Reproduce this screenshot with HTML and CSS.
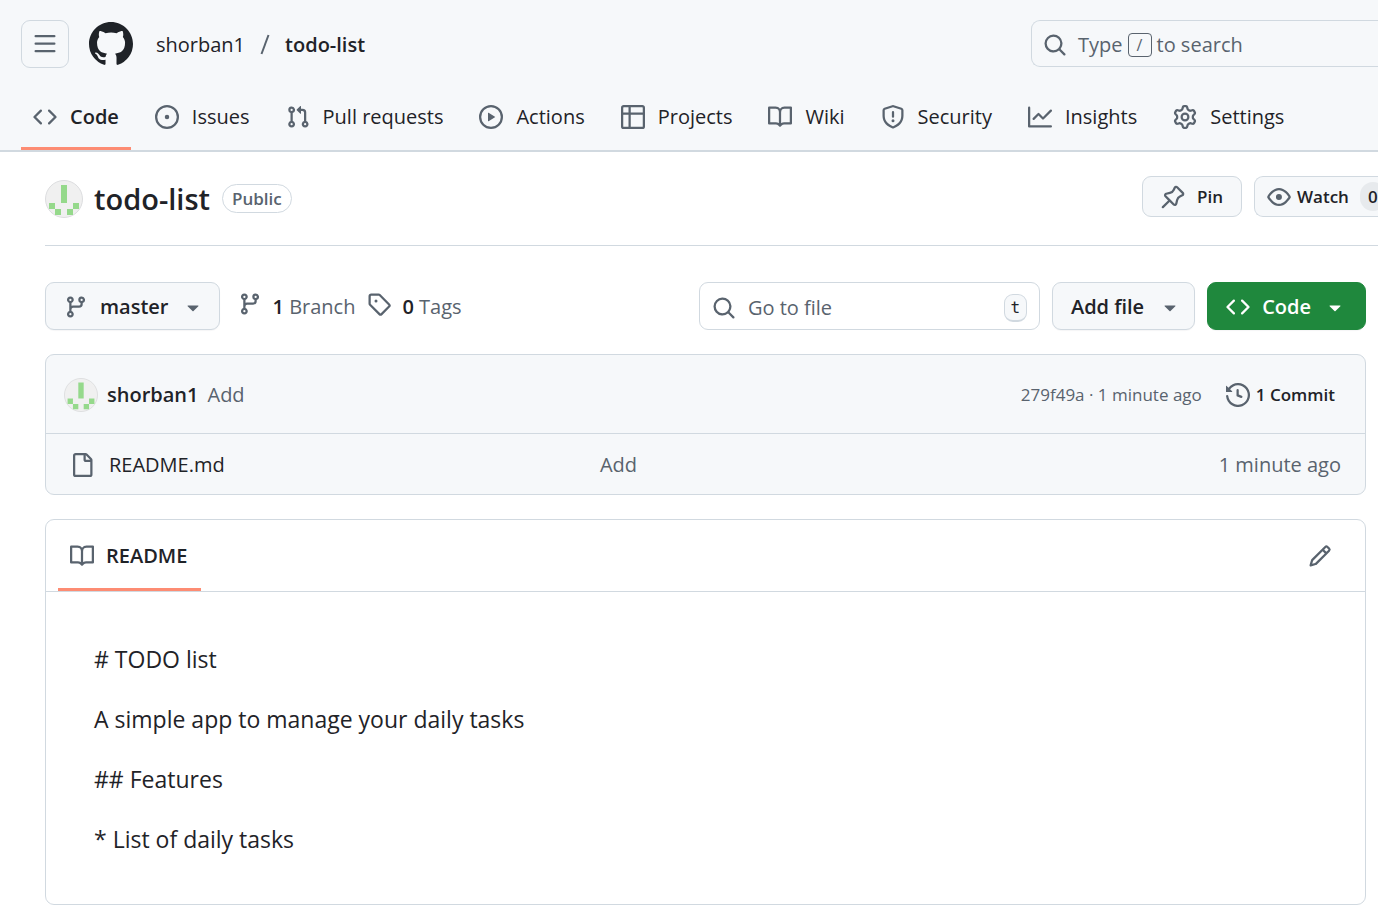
FILE: index.html
```html
<!DOCTYPE html>
<html lang="en">
<head>
<meta charset="utf-8">
<meta name="viewport" content="width=device-width, initial-scale=1">
<title>shorban1/todo-list</title>
<link rel="stylesheet" href="styles.css">
</head>
<body>
<svg class="sprite" aria-hidden="true">
  <symbol id="i-menu" viewBox="0 0 16 16"><path d="M1 2.75A.75.75 0 0 1 1.75 2h12.5a.75.75 0 0 1 0 1.5H1.75A.75.75 0 0 1 1 2.75Zm0 5A.75.75 0 0 1 1.75 7h12.5a.75.75 0 0 1 0 1.5H1.75A.75.75 0 0 1 1 7.75ZM1.75 12h12.5a.75.75 0 0 1 0 1.5H1.75a.75.75 0 0 1 0-1.5Z"/></symbol>
  <symbol id="i-mark" viewBox="0 0 16 16"><path d="M8 0c4.42 0 8 3.58 8 8a8.013 8.013 0 0 1-5.45 7.59c-.4.08-.55-.17-.55-.38 0-.27.01-1.13.01-2.2 0-.75-.25-1.23-.54-1.48 1.78-.2 3.65-.88 3.65-3.95 0-.88-.31-1.59-.82-2.15.08-.2.36-1.02-.08-2.12 0 0-.67-.22-2.2.82-.64-.18-1.32-.27-2-.27-.68 0-1.36.09-2 .27-1.53-1.03-2.2-.82-2.2-.82-.44 1.1-.16 1.92-.08 2.12-.51.56-.82 1.28-.82 2.15 0 3.06 1.86 3.75 3.64 3.95-.23.2-.44.55-.51 1.07-.46.21-1.61.55-2.33-.66-.15-.24-.6-.83-1.23-.82-.67.01-.27.38.01.53.34.19.73.9.82 1.13.16.45.68 1.31 2.69.94 0 .67.01 1.3.01 1.49 0 .21-.15.45-.55.38A7.995 7.995 0 0 1 0 8c0-4.42 3.58-8 8-8Z"/></symbol>
  <symbol id="i-search" viewBox="0 0 16 16"><path d="M10.68 11.74a6 6 0 0 1-7.922-8.982 6 6 0 0 1 8.982 7.922l3.04 3.04a.749.749 0 0 1-.326 1.275.749.749 0 0 1-.734-.215ZM11.5 7a4.499 4.499 0 1 0-8.997 0A4.499 4.499 0 0 0 11.5 7Z"/></symbol>
  <symbol id="i-code" viewBox="0 0 16 16"><path d="m11.28 3.22 4.25 4.25a.75.75 0 0 1 0 1.06l-4.25 4.25a.749.749 0 0 1-1.275-.326.749.749 0 0 1 .215-.734L13.94 8l-3.72-3.72a.749.749 0 0 1 .326-1.275.749.749 0 0 1 .734.215Zm-6.56 0a.751.751 0 0 1 1.042.018.751.751 0 0 1 .018 1.042L2.06 8l3.72 3.72a.749.749 0 0 1-.326 1.275.749.749 0 0 1-.734-.215L.47 8.53a.75.75 0 0 1 0-1.06Z"/></symbol>
  <symbol id="i-issue" viewBox="0 0 16 16"><path d="M8 9.5a1.5 1.5 0 1 0 0-3 1.5 1.5 0 0 0 0 3Z"/><path d="M8 0a8 8 0 1 1 0 16A8 8 0 0 1 8 0ZM1.5 8a6.5 6.5 0 1 0 13 0 6.5 6.5 0 0 0-13 0Z"/></symbol>
  <symbol id="i-pull" viewBox="0 0 16 16"><path d="M1.5 3.25a2.25 2.25 0 1 1 3 2.122v5.256a2.251 2.251 0 1 1-1.5 0V5.372A2.25 2.25 0 0 1 1.5 3.25Zm5.677-.177L9.573.677A.25.25 0 0 1 10 .854V2.5h1A2.5 2.5 0 0 1 13.5 5v5.628a2.251 2.251 0 1 1-1.5 0V5a1 1 0 0 0-1-1h-1v1.646a.25.25 0 0 1-.427.177L7.177 3.427a.25.25 0 0 1 0-.354ZM3.75 2.5a.75.75 0 1 0 0 1.5.75.75 0 0 0 0-1.5Zm0 9.5a.75.75 0 1 0 0 1.5.75.75 0 0 0 0-1.5Zm8.25.75a.75.75 0 1 0 1.5 0 .75.75 0 0 0-1.5 0Z"/></symbol>
  <symbol id="i-play" viewBox="0 0 16 16"><path d="M8 0a8 8 0 1 1 0 16A8 8 0 0 1 8 0ZM1.5 8a6.5 6.5 0 1 0 13 0 6.5 6.5 0 0 0-13 0Zm4.879-2.773 4.264 2.559a.25.25 0 0 1 0 .428l-4.264 2.559A.25.25 0 0 1 6 10.559V5.442a.25.25 0 0 1 .379-.215Z"/></symbol>
  <symbol id="i-table" viewBox="0 0 16 16"><path d="M0 1.75C0 .784.784 0 1.75 0h12.5C15.216 0 16 .784 16 1.75v12.5A1.75 1.75 0 0 1 14.25 16H1.75A1.75 1.75 0 0 1 0 14.25ZM6.5 6.5v8h7.75a.25.25 0 0 0 .25-.25V6.5Zm8-1.5V1.75a.25.25 0 0 0-.25-.25H6.5V5Zm-13 1.5v7.75c0 .138.112.25.25.25H5v-8ZM5 5V1.5H1.75a.25.25 0 0 0-.25.25V5Z"/></symbol>
  <symbol id="i-book" viewBox="0 0 16 16"><path d="M0 1.75A.75.75 0 0 1 .75 1h4.253c1.227 0 2.317.59 3 1.501A3.743 3.743 0 0 1 11.006 1h4.245a.75.75 0 0 1 .75.75v10.5a.75.75 0 0 1-.75.75h-4.507a2.25 2.25 0 0 0-1.591.659l-.622.621a.75.75 0 0 1-1.06 0l-.622-.621A2.25 2.25 0 0 0 5.258 13H.75a.75.75 0 0 1-.75-.75Zm7.251 10.324.004-5.073-.002-2.253A2.25 2.25 0 0 0 5.003 2.5H1.5v9h3.757a3.75 3.75 0 0 1 1.994.574ZM8.755 4.75l-.004 7.322a3.752 3.752 0 0 1 1.992-.572H14.5v-9h-3.495a2.25 2.25 0 0 0-2.25 2.25Z"/></symbol>
  <symbol id="i-shield" viewBox="0 0 16 16"><path d="M7.467.133a1.748 1.748 0 0 1 1.066 0l5.25 1.68A1.75 1.75 0 0 1 15 3.48V7c0 1.566-.32 3.182-1.303 4.682-.983 1.498-2.585 2.813-5.032 3.855a1.697 1.697 0 0 1-1.33 0c-2.447-1.042-4.049-2.357-5.032-3.855C1.32 10.182 1 8.566 1 7V3.48a1.75 1.75 0 0 1 1.217-1.667Zm.61 1.429a.25.25 0 0 0-.153 0l-5.25 1.68a.25.25 0 0 0-.174.238V7c0 1.358.275 2.666 1.057 3.86.784 1.194 2.121 2.34 4.366 3.297a.196.196 0 0 0 .154 0c2.245-.956 3.582-2.104 4.366-3.298C13.225 9.666 13.5 8.36 13.5 7V3.48a.251.251 0 0 0-.174-.237l-5.25-1.68ZM8.75 4.75v3a.75.75 0 0 1-1.5 0v-3a.75.75 0 0 1 1.5 0ZM9 10.5a1 1 0 1 1-2 0 1 1 0 0 1 2 0Z"/></symbol>
  <symbol id="i-graph" viewBox="0 0 16 16"><path d="M1.5 1.75V13.5h13.75a.75.75 0 0 1 0 1.5H.75a.75.75 0 0 1-.75-.75V1.75a.75.75 0 0 1 1.5 0Zm14.28 2.53-5.25 5.25a.75.75 0 0 1-1.06 0L7 7.06 4.28 9.78a.751.751 0 0 1-1.042-.018.751.751 0 0 1-.018-1.042l3.25-3.25a.75.75 0 0 1 1.06 0L10 7.94l4.72-4.72a.751.751 0 0 1 1.042.018.751.751 0 0 1 .018 1.042Z"/></symbol>
  <symbol id="i-gear" viewBox="0 0 16 16"><path d="M8 0a8.2 8.2 0 0 1 .701.031C9.444.095 9.99.645 10.16 1.29l.288 1.107c.018.066.079.158.212.224.231.114.454.243.668.386.123.082.233.09.299.071l1.103-.303c.644-.176 1.392.021 1.82.63.27.385.506.792.704 1.218.315.675.111 1.422-.364 1.891l-.814.806c-.049.048-.098.147-.088.294.016.257.016.515 0 .772-.01.147.038.246.088.294l.814.806c.475.469.679 1.216.364 1.891a7.977 7.977 0 0 1-.704 1.217c-.428.61-1.176.807-1.82.63l-1.102-.302c-.067-.019-.177-.011-.3.071a5.909 5.909 0 0 1-.668.386c-.133.066-.194.158-.211.224l-.29 1.106c-.168.646-.715 1.196-1.458 1.26a8.006 8.006 0 0 1-1.402 0c-.743-.064-1.289-.614-1.458-1.26l-.289-1.106c-.018-.066-.079-.158-.212-.224a5.738 5.738 0 0 1-.668-.386c-.123-.082-.233-.09-.299-.071l-1.103.303c-.644.176-1.392-.021-1.82-.63a8.12 8.12 0 0 1-.704-1.218c-.315-.675-.111-1.422.363-1.891l.815-.806c.05-.048.098-.147.088-.294a6.214 6.214 0 0 1 0-.772c.01-.147-.038-.246-.088-.294l-.815-.806C.635 6.045.431 5.298.746 4.623a7.92 7.92 0 0 1 .704-1.217c.428-.61 1.176-.807 1.82-.63l1.102.302c.067.019.177.011.3-.071.214-.143.437-.272.668-.386.133-.066.194-.158.211-.224l.29-1.106C6.009.645 6.556.095 7.299.03 7.53.01 7.764 0 8 0Zm-.571 1.525c-.036.003-.108.036-.137.146l-.289 1.105c-.147.561-.549.967-.998 1.189-.173.086-.34.183-.5.29-.417.278-.97.423-1.529.27l-1.103-.303c-.109-.03-.175.016-.195.045-.22.312-.412.644-.573.99-.014.031-.021.11.059.19l.815.806c.411.406.562.957.53 1.456a4.709 4.709 0 0 0 0 .582c.032.499-.119 1.05-.53 1.456l-.815.806c-.081.08-.073.159-.059.19.162.346.353.677.573.989.02.03.085.076.195.046l1.102-.303c.56-.153 1.113-.008 1.53.27.161.107.328.204.501.29.447.222.85.629.997 1.189l.289 1.105c.029.109.101.143.137.146a6.6 6.6 0 0 0 1.142 0c.036-.003.108-.036.137-.146l.289-1.105c.147-.561.549-.967.998-1.189.173-.086.34-.183.5-.29.417-.278.97-.423 1.529-.27l1.103.303c.109.029.175-.016.195-.045.22-.313.411-.644.573-.99.014-.031.021-.11-.059-.19l-.815-.806c-.411-.406-.562-.957-.53-1.456a4.709 4.709 0 0 0 0-.582c-.032-.499.119-1.05.53-1.456l.815-.806c.081-.08.073-.159.059-.19a6.464 6.464 0 0 0-.573-.989c-.02-.03-.085-.076-.195-.046l-1.102.303c-.56.153-1.113.008-1.53-.27a4.44 4.44 0 0 0-.501-.29c-.447-.222-.85-.629-.997-1.189l-.289-1.105c-.029-.11-.101-.143-.137-.146a6.6 6.6 0 0 0-1.142 0ZM11 8a3 3 0 1 1-6 0 3 3 0 0 1 6 0ZM9.5 8a1.5 1.5 0 1 0-3.001.001A1.5 1.5 0 0 0 9.5 8Z"/></symbol>
  <symbol id="i-pin" viewBox="0 0 16 16"><path d="m11.294.984 3.722 3.722a1.75 1.75 0 0 1-.504 2.826l-1.327.613a3.089 3.089 0 0 0-1.707 2.084l-.584 2.454c-.317 1.332-1.972 1.8-2.94.832L5.75 11.311 1.78 15.28a.749.749 0 1 1-1.06-1.06l3.969-3.97-2.204-2.204c-.968-.968-.5-2.623.832-2.94l2.454-.584a3.08 3.08 0 0 0 2.084-1.707l.613-1.327a1.75 1.75 0 0 1 2.826-.504ZM6.283 9.723l2.732 2.731a.25.25 0 0 0 .42-.119l.584-2.454a4.586 4.586 0 0 1 2.537-3.098l1.328-.613a.25.25 0 0 0 .072-.404l-3.722-3.722a.25.25 0 0 0-.404.072l-.613 1.328a4.584 4.584 0 0 1-3.098 2.537l-2.454.584a.25.25 0 0 0-.119.42l2.731 2.732Z"/></symbol>
  <symbol id="i-eye" viewBox="0 0 16 16"><path d="M8 2c1.981 0 3.671.992 4.933 2.078 1.27 1.091 2.187 2.345 2.637 3.023a1.62 1.62 0 0 1 0 1.798c-.45.678-1.367 1.932-2.637 3.023C11.67 13.008 9.981 14 8 14c-1.981 0-3.671-.992-4.933-2.078C1.797 10.83.88 9.576.43 8.898a1.62 1.62 0 0 1 0-1.798c.45-.677 1.367-1.931 2.637-3.022C4.33 2.992 6.019 2 8 2ZM1.679 7.932a.12.12 0 0 0 0 .136c.411.622 1.241 1.75 2.366 2.717C5.176 11.758 6.527 12.5 8 12.5c1.473 0 2.825-.742 3.955-1.715 1.124-.967 1.954-2.096 2.366-2.717a.12.12 0 0 0 0-.136c-.412-.621-1.242-1.75-2.366-2.717C10.824 4.242 9.473 3.5 8 3.5c-1.473 0-2.825.742-3.955 1.715-1.124.967-1.954 2.096-2.366 2.717ZM8 10a2 2 0 1 1-.001-3.999A2 2 0 0 1 8 10Z"/></symbol>
  <symbol id="i-branch" viewBox="0 0 16 16"><path d="M9.5 3.25a2.25 2.25 0 1 1 3 2.122V6A2.5 2.5 0 0 1 10 8.5H6a1 1 0 0 0-1 1v1.128a2.251 2.251 0 1 1-1.5 0V5.372a2.25 2.25 0 1 1 1.5 0v1.836A2.493 2.493 0 0 1 6 7h4a1 1 0 0 0 1-1v-.628A2.25 2.25 0 0 1 9.5 3.25Zm-6 0a.75.75 0 1 0 1.5 0 .75.75 0 0 0-1.5 0Zm8.25-.75a.75.75 0 1 0 0 1.5.75.75 0 0 0 0-1.5ZM4.25 12a.75.75 0 1 0 0 1.5.75.75 0 0 0 0-1.5Z"/></symbol>
  <symbol id="i-tag" viewBox="0 0 16 16"><path d="M1 7.775V2.75C1 1.784 1.784 1 2.75 1h5.025c.464 0 .91.184 1.238.513l6.25 6.25a1.75 1.75 0 0 1 0 2.474l-5.026 5.026a1.75 1.75 0 0 1-2.474 0l-6.25-6.25A1.752 1.752 0 0 1 1 7.775Zm1.5 0c0 .066.026.13.073.177l6.25 6.25a.25.25 0 0 0 .354 0l5.025-5.025a.25.25 0 0 0 0-.354l-6.25-6.25a.25.25 0 0 0-.177-.073H2.75a.25.25 0 0 0-.25.25ZM6 5a1 1 0 1 1 0 2 1 1 0 0 1 0-2Z"/></symbol>
  <symbol id="i-caret" viewBox="0 0 16 16"><path d="m4.427 7.427 3.396 3.396a.25.25 0 0 0 .354 0l3.396-3.396A.25.25 0 0 0 11.396 7H4.604a.25.25 0 0 0-.177.427Z"/></symbol>
  <symbol id="i-history" viewBox="0 0 16 16"><path d="m.427 1.927 1.215 1.215a8.002 8.002 0 1 1-1.6 5.685.75.75 0 1 1 1.493-.154 6.5 6.5 0 1 0 1.18-4.458l1.358 1.358A.25.25 0 0 1 3.896 6H.25A.25.25 0 0 1 0 5.75V2.104a.25.25 0 0 1 .427-.177ZM7.75 4a.75.75 0 0 1 .75.75v2.992l2.028.812a.75.75 0 0 1-.557 1.392l-2.5-1A.751.751 0 0 1 7 8.25v-3.5A.75.75 0 0 1 7.75 4Z"/></symbol>
  <symbol id="i-file" viewBox="0 0 16 16"><path d="M2 1.75C2 .784 2.784 0 3.75 0h6.586c.464 0 .909.184 1.237.513l2.914 2.914c.329.328.513.773.513 1.237v9.586A1.75 1.75 0 0 1 13.25 16h-9.5A1.75 1.75 0 0 1 2 14.25Zm1.75-.25a.25.25 0 0 0-.25.25v12.5c0 .138.112.25.25.25h9.5a.25.25 0 0 0 .25-.25V6h-2.75A1.75 1.75 0 0 1 9 4.25V1.5Zm6.75.062V4.25c0 .138.112.25.25.25h2.688l-.011-.013-2.914-2.914-.013-.011Z"/></symbol>
  <symbol id="i-pencil" viewBox="0 0 16 16"><path d="M11.013 1.427a1.75 1.75 0 0 1 2.474 0l1.086 1.086a1.75 1.75 0 0 1 0 2.474l-8.61 8.61c-.21.21-.47.364-.756.445l-3.251.93a.75.75 0 0 1-.927-.928l.929-3.25c.081-.286.235-.547.445-.758l8.61-8.61Zm.176 4.823L9.75 4.81l-6.286 6.287a.253.253 0 0 0-.064.108l-.558 1.953 1.953-.558a.253.253 0 0 0 .108-.064Zm1.238-3.763a.25.25 0 0 0-.354 0L10.811 3.75l1.439 1.44 1.263-1.263a.25.25 0 0 0 0-.354Z"/></symbol>
  <symbol id="i-avatar" viewBox="0 0 38 38"><circle cx="19" cy="19" r="18.5" fill="#f0f0f0" stroke="#dcdddf"/><path fill="#95d98b" d="M16 5h6v18h-6zM4 23h6v6H4zM28 23h6v6h-6zM10 29h6v6h-6zM22 29h6v6h-6z"/></symbol>
</svg>

<header class="site-header">
  <div class="top-bar">
    <button class="menu-button" type="button" aria-label="Open menu"><svg class="icon"><use href="#i-menu"/></svg></button>
    <a class="mark" href="#" aria-label="Home"><svg class="mark-icon"><use href="#i-mark"/></svg></a>
    <nav class="crumbs" aria-label="Breadcrumb">
      <a href="#">shorban1</a>
      <svg class="slash" viewBox="0 0 10 22" aria-hidden="true"><path d="M8.500 1 1.500 20"/></svg>
      <a class="current" href="#">todo-list</a>
    </nav>
    <button class="site-search" type="button">
      <svg class="icon"><use href="#i-search"/></svg>
      <span class="search-hint">Type <kbd class="slash-key">/</kbd> to search</span>
    </button>
  </div>
  <nav class="tabs" aria-label="Repository">
    <a class="tab selected" href="#"><svg class="icon"><use href="#i-code"/></svg>Code</a>
    <a class="tab" href="#"><svg class="icon"><use href="#i-issue"/></svg>Issues</a>
    <a class="tab" href="#"><svg class="icon"><use href="#i-pull"/></svg>Pull requests</a>
    <a class="tab" href="#"><svg class="icon"><use href="#i-play"/></svg>Actions</a>
    <a class="tab" href="#"><svg class="icon"><use href="#i-table"/></svg>Projects</a>
    <a class="tab" href="#"><svg class="icon"><use href="#i-book"/></svg>Wiki</a>
    <a class="tab" href="#"><svg class="icon"><use href="#i-shield"/></svg>Security</a>
    <a class="tab" href="#"><svg class="icon"><use href="#i-graph"/></svg>Insights</a>
    <a class="tab" href="#"><svg class="icon"><use href="#i-gear"/></svg>Settings</a>
  </nav>
</header>

<main>
  <div class="repo-head">
    <svg class="avatar"><use href="#i-avatar"/></svg>
    <h1 class="repo-name">todo-list</h1>
    <span class="visibility">Public</span>
    <div class="repo-actions">
      <button class="small-button pin" type="button"><svg class="icon"><use href="#i-pin"/></svg>Pin</button>
      <button class="small-button watch" type="button"><svg class="icon"><use href="#i-eye"/></svg>Watch<span class="count">0</span></button>
    </div>
  </div>

  <div class="content">
    <div class="toolbar">
      <button class="button branch-button" type="button"><svg class="icon"><use href="#i-branch"/></svg>master<svg class="icon"><use href="#i-caret"/></svg></button>
      <a class="stat" href="#"><svg class="icon"><use href="#i-branch"/></svg><span><b>1</b> Branch</span></a>
      <a class="stat tags" href="#"><svg class="icon"><use href="#i-tag"/></svg><span><b>0</b> Tags</span></a>
      <label class="file-search">
        <svg class="icon"><use href="#i-search"/></svg>
        <input type="text" placeholder="Go to file" aria-label="Go to file">
        <kbd class="key">t</kbd>
      </label>
      <button class="button add-button" type="button">Add file<svg class="icon"><use href="#i-caret"/></svg></button>
      <button class="button code-button" type="button"><svg class="icon"><use href="#i-code"/></svg>Code<svg class="icon"><use href="#i-caret"/></svg></button>
    </div>

    <div class="panel files">
      <table class="file-table">
        <colgroup>
          <col class="col-name">
          <col>
          <col class="col-age">
        </colgroup>
        <thead>
          <tr><th colspan="3">
            <div class="commit">
              <svg class="avatar-small"><use href="#i-avatar"/></svg>
              <a class="author" href="#">shorban1</a>
              <a class="message" href="#">Add</a>
              <span class="when">279f49a · 1 minute ago</span>
              <a class="commits" href="#"><svg class="icon"><use href="#i-history"/></svg>1 Commit</a>
            </div>
          </th></tr>
        </thead>
        <tbody>
          <tr>
            <td class="name"><a class="file" href="#"><svg class="icon"><use href="#i-file"/></svg>README.md</a></td>
            <td class="note">Add</td>
            <td class="age">1 minute ago</td>
          </tr>
        </tbody>
      </table>
    </div>

    <section class="panel">
      <div class="readme-head">
        <a class="readme-tab" href="#"><svg class="icon"><use href="#i-book"/></svg>README</a>
        <button class="edit" type="button" aria-label="Edit file"><svg class="icon"><use href="#i-pencil"/></svg></button>
      </div>
      <article class="readme">
        <p># TODO list</p>
        <p>A simple app to manage your daily tasks</p>
        <p>## Features</p>
        <p>* List of daily tasks</p>
      </article>
    </section>
  </div>
</main>
</body>
</html>
```
FILE: styles.css
```css
:root {
  --text: #1f2328;
  --muted: #59636e;
  --line: #d1d9e0;
  --soft: #f6f8fa;
  --accent: #fd8c73;
  --green: #1f883d;
}

* {
  box-sizing: border-box;
}

body {
  margin: 0;
  overflow-x: hidden;
  background: #fff;
  color: var(--text);
  font: 20px/30px "Segoe UI", "Open Sans", "Noto Sans", sans-serif;
}

a {
  color: inherit;
  text-decoration: none;
}

button,
input,
kbd {
  color: inherit;
  font: inherit;
}

button {
  cursor: pointer;
}

.sprite {
  display: none;
}

.icon {
  flex: none;
  width: 24px;
  height: 24px;
  fill: var(--muted);
}

/* Site header */

.site-header {
  padding-top: 20px;
  border-bottom: 2px solid var(--line);
  background: var(--soft);
}

.top-bar {
  display: flex;
  align-items: flex-start;
  padding-left: 21px;
}

.menu-button {
  display: grid;
  place-items: center;
  width: 48px;
  height: 48px;
  padding: 0;
  border: 1px solid var(--line);
  border-radius: 9px;
  background: none;
}

.mark {
  margin: 2px 23px 0 20px;
}

.mark-icon {
  display: block;
  width: 44px;
  height: 44px;
  fill: var(--text);
}

.crumbs {
  display: flex;
  flex: 1;
  align-items: center;
  padding-top: 10px;
}

.slash {
  width: 10px;
  height: 22px;
  margin: 0 15px;
  fill: none;
  stroke: var(--muted);
  stroke-width: 2;
}

.current {
  font-weight: 600;
}

.site-search {
  display: flex;
  align-items: center;
  gap: 11px;
  width: 347px;
  height: 47px;
  padding: 2px 11px 0;
  border: 1px solid var(--line);
  border-right: 0;
  border-radius: 9px 0 0 9px;
  background: none;
  color: var(--muted);
}

.search-hint {
  display: flex;
  align-items: center;
  gap: 5px;
}

.slash-key {
  width: 24px;
  height: 24px;
  border: 1px solid var(--muted);
  border-radius: 4px;
  font-size: 16px;
  line-height: 22px;
  text-align: center;
}

.tabs {
  display: flex;
  gap: 12px;
  margin-top: 14px;
  padding-left: 21px;
}

.tab {
  display: flex;
  align-items: center;
  gap: 13px;
  padding: 20px 12px 15px;
  border-bottom: 3px solid transparent;
  line-height: 30px;
}

.tab.selected {
  border-color: var(--accent);
  font-weight: 600;
}

/* Repository heading */

.repo-head {
  display: flex;
  align-items: center;
  height: 94px;
  margin-left: 45px;
  border-bottom: 1px solid var(--line);
}

.avatar {
  width: 38px;
  height: 38px;
}

.repo-name {
  margin: 0 12px 0 11px;
  font-size: 29px;
  font-weight: 600;
  line-height: 36px;
}

.visibility {
  padding: 0 9px;
  border: 1px solid var(--line);
  border-radius: 15px;
  color: var(--muted);
  font-size: 17px;
  font-weight: 600;
  line-height: 27px;
}

.repo-actions {
  display: flex;
  gap: 12px;
  margin-left: auto;
  padding-bottom: 4px;
}

.small-button {
  display: flex;
  align-items: center;
  height: 41px;
  border: 1px solid var(--line);
  border-radius: 9px;
  background: var(--soft);
  font-size: 17px;
  font-weight: 600;
}

.pin {
  gap: 12px;
  padding: 0 18px;
}

.watch {
  gap: 6px;
  width: 124px;
  padding: 0 0 0 12px;
  overflow: hidden;
  border-right: 0;
  border-radius: 9px 0 0 9px;
}

.count {
  flex: none;
  margin-left: 5px;
  padding: 0 8px;
  border-radius: 15px;
  background: #e7eaed;
  line-height: 29px;
}

/* Toolbar */

.content {
  padding: 36px 12px 19px 45px;
}

.toolbar {
  display: flex;
  align-items: center;
  gap: 12px;
}

.button {
  display: flex;
  align-items: center;
  height: 48px;
  border: 1px solid var(--line);
  border-radius: 9px;
  background: var(--soft);
  box-shadow: 0 1px 1px #1f23280a;
  font-weight: 600;
}

.branch-button {
  gap: 12px;
  padding: 2px 14px 0 18px;
}

.stat {
  display: flex;
  align-items: flex-start;
  gap: 11px;
  margin-left: 6px;
  padding-top: 2px;
  color: var(--muted);
}

.stat.tags {
  margin-left: 0;
}

.stat b {
  color: var(--text);
  font-weight: 600;
}

.file-search {
  display: flex;
  align-items: center;
  gap: 12px;
  width: 341px;
  height: 48px;
  margin-left: auto;
  padding: 3px 12px 0;
  border: 1px solid var(--line);
  border-radius: 9px;
}

.file-search input {
  flex: 1;
  min-width: 0;
  padding: 0;
  border: 0;
  outline: 0;
  background: none;
}

.file-search input::placeholder {
  color: var(--muted);
  opacity: 1;
}

.key {
  width: 23px;
  height: 28px;
  border: 1px solid var(--line);
  border-bottom-width: 2px;
  border-radius: 9px;
  background: var(--soft);
  font: 16px/26px "DejaVu Sans Mono", monospace;
  text-align: center;
}

.add-button {
  gap: 14px;
  padding: 2px 12px 0 18px;
}

.code-button {
  gap: 12px;
  padding: 2px 18px 0;
  border-color: var(--green);
  background: var(--green);
  color: #fff;
}

.code-button .icon {
  fill: #fff;
}

/* Panels */

.panel {
  margin-top: 24px;
  overflow: hidden;
  border: 1px solid var(--line);
  border-radius: 9px;
}

.files {
  background: var(--soft);
}

.file-table {
  width: 100%;
  border-collapse: collapse;
  table-layout: fixed;
}

.col-name {
  width: 42%;
}

.col-age {
  width: 18%;
}

.file-table th {
  height: 78px;
  padding: 2px 30px 0 18px;
  border-bottom: 1px solid var(--line);
  font-weight: 400;
}

.file-table td {
  height: 61px;
  padding: 2px 0 0;
  color: var(--muted);
}

.commit {
  display: flex;
  align-items: center;
}

.avatar-small {
  width: 34px;
  height: 34px;
  margin-right: 9px;
}

.author {
  margin-right: 9px;
  font-weight: 600;
}

.message {
  color: var(--muted);
}

.when {
  margin-left: auto;
  color: var(--muted);
  font-size: 17px;
}

.commits {
  display: flex;
  align-items: center;
  gap: 6px;
  margin-left: 24px;
  font-size: 17px;
  font-weight: 600;
}

.file {
  display: flex;
  align-items: center;
  gap: 15px;
  padding-left: 24px;
  color: var(--text);
}

.file-table .age {
  padding-right: 24px;
  text-align: right;
}

.readme-head {
  display: flex;
  align-items: center;
  justify-content: space-between;
  height: 72px;
  padding: 0 24px 0 12px;
  border-bottom: 1px solid var(--line);
}

.readme-tab {
  display: flex;
  align-self: stretch;
  align-items: center;
  gap: 12px;
  padding: 3px 14px 0 12px;
  border-bottom: 3px solid var(--accent);
  font-weight: 600;
}

.edit {
  display: grid;
  place-items: center;
  width: 42px;
  height: 42px;
  padding: 0;
  border: 0;
  background: none;
}

.readme {
  padding: 49px 48px 47px;
  font-size: 23px;
  line-height: 36px;
}

.readme p {
  margin: 0;
}

.readme p + p {
  margin-top: 24px;
}
```
